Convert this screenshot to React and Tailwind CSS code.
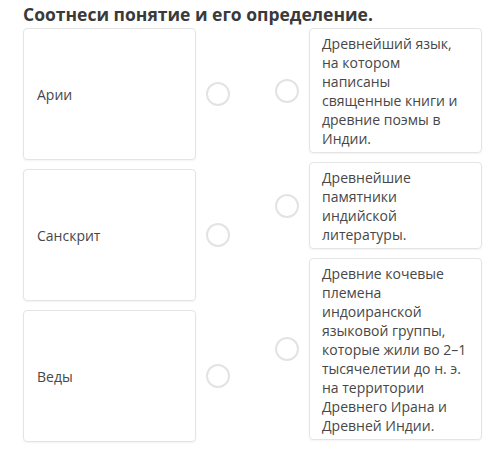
export default function App() {
  const font = { fontFamily: '"Open Sans", "Noto Sans", sans-serif' };
  const Circle = () => (
    <div className="w-[24px] h-[24px] rounded-full border-2 border-[#e3e3e3] bg-white shrink-0" />
  );
  const left = ["Арии", "Санскрит", "Веды"];
  const right = [
    "Древнейший язык, на котором написаны священные книги и древние поэмы в Индии.",
    "Древнейшие памятники индийской литературы.",
    "Древние кочевые племена индоиранской языковой группы, которые жили во 2–1 тысячелетии до н. э. на территории Древнего Ирана и Древней Индии.",
  ];
  return (
    <div className="w-[500px] h-[464px] bg-white text-[#474747]" style={font}>
      <div className="pl-[23px] pt-[3px] h-[28px] text-[17.5px] leading-[22px] font-bold text-[#3a3a3a]">
        Соотнеси понятие и его определение.
      </div>
      <div className="flex pl-[23px]">
        <div className="flex flex-col gap-[9px] w-[207px]">
          {left.map((t) => (
            <div key={t} className="flex items-center gap-[10px]">
              <div className="w-[173px] h-[132px] border border-[#e4e4e4] rounded-[4px] shadow-[0_1px_2px_rgba(0,0,0,0.05)] flex items-center pl-[13px] text-[14px]">
                {t}
              </div>
              <Circle />
            </div>
          ))}
        </div>
        <div className="flex flex-col gap-[9px] ml-[45px]">
          {right.map((t, i) => (
            <div key={i} className="flex items-center gap-[10px]">
              <Circle />
              <div className="w-[173px] border border-[#e4e4e4] rounded-[4px] shadow-[0_1px_2px_rgba(0,0,0,0.05)] pl-[12px] pr-[14px] pt-[5px] pb-[4px] text-[14px] leading-[19px]">
                {t}
              </div>
            </div>
          ))}
        </div>
      </div>
    </div>
  );
}
